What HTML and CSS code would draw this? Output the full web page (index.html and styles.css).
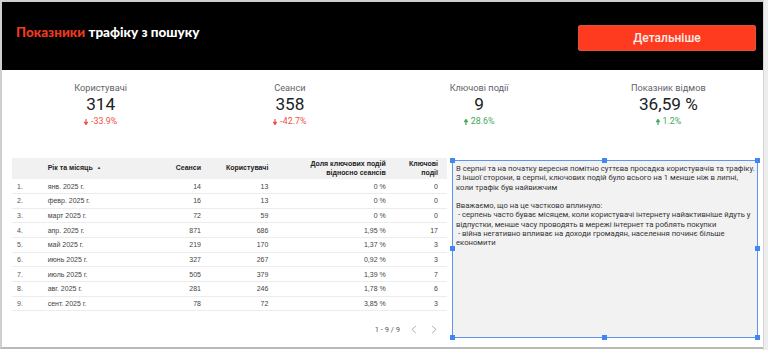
FILE: index.html
```html
<!DOCTYPE html>
<html lang="uk">
<head>
<meta charset="utf-8">
<title>Показники трафіку з пошуку</title>
<link rel="stylesheet" href="styles.css">
</head>
<body>
<div class="frame">
  <div class="page">
    <header class="hero">
      <h1 class="title"><span class="accent">Показники</span> трафіку з пошуку</h1>
      <a class="btn" href="#">Детальніше</a>
    </header>

    <section class="metrics">
      <div class="metric">
        <div class="m-label">Користувачі</div>
        <div class="m-value">314</div>
        <div class="m-delta down"><svg class="arr" viewBox="0 0 4 6"><path d="M2 0V4.5M0.6 3.4L2 5.6L3.4 3.4Z" /></svg>-33.9%</div>
      </div>
      <div class="metric">
        <div class="m-label">Сеанси</div>
        <div class="m-value">358</div>
        <div class="m-delta down"><svg class="arr" viewBox="0 0 4 6"><path d="M2 0V4.5M0.6 3.4L2 5.6L3.4 3.4Z" /></svg>-42.7%</div>
      </div>
      <div class="metric">
        <div class="m-label">Ключові події</div>
        <div class="m-value">9</div>
        <div class="m-delta up"><svg class="arr" viewBox="0 0 4 6"><path d="M2 6V1.5M0.6 2.6L2 0.4L3.4 2.6Z" /></svg>28.6%</div>
      </div>
      <div class="metric">
        <div class="m-label">Показник відмов</div>
        <div class="m-value">36,59 %</div>
        <div class="m-delta up"><svg class="arr" viewBox="0 0 4 6"><path d="M2 6V1.5M0.6 2.6L2 0.4L3.4 2.6Z" /></svg>1.2%</div>
      </div>
    </section>

    <section class="lower">
      <div class="tablewrap">
        <table class="data">
          <thead>
            <tr>
              <th class="c-idx"></th>
              <th class="c-date">Рік та місяць <span class="sort">▲</span></th>
              <th class="num c-s">Сеанси</th>
              <th class="num c-u">Користувачі</th>
              <th class="num c-r">Доля ключових подій<br>відносно сеансів</th>
              <th class="num c-k">Ключові<br>події</th>
            </tr>
          </thead>
          <tbody>
            <tr><td class="c-idx">1.</td><td>янв. 2025 г.</td><td class="num">14</td><td class="num">13</td><td class="num">0 %</td><td class="num">0</td></tr>
            <tr><td class="c-idx">2.</td><td>февр. 2025 г.</td><td class="num">16</td><td class="num">13</td><td class="num">0 %</td><td class="num">0</td></tr>
            <tr><td class="c-idx">3.</td><td>март 2025 г.</td><td class="num">72</td><td class="num">59</td><td class="num">0 %</td><td class="num">0</td></tr>
            <tr><td class="c-idx">4.</td><td>апр. 2025 г.</td><td class="num">871</td><td class="num">686</td><td class="num">1,95 %</td><td class="num">17</td></tr>
            <tr><td class="c-idx">5.</td><td>май 2025 г.</td><td class="num">219</td><td class="num">170</td><td class="num">1,37 %</td><td class="num">3</td></tr>
            <tr><td class="c-idx">6.</td><td>июнь 2025 г.</td><td class="num">327</td><td class="num">267</td><td class="num">0,92 %</td><td class="num">3</td></tr>
            <tr><td class="c-idx">7.</td><td>июль 2025 г.</td><td class="num">505</td><td class="num">379</td><td class="num">1,39 %</td><td class="num">7</td></tr>
            <tr><td class="c-idx">8.</td><td>авг. 2025 г.</td><td class="num">281</td><td class="num">246</td><td class="num">1,78 %</td><td class="num">6</td></tr>
            <tr><td class="c-idx">9.</td><td>сент. 2025 г.</td><td class="num">78</td><td class="num">72</td><td class="num">3,85 %</td><td class="num">3</td></tr>
          </tbody>
        </table>
        <div class="pager">
          <span class="range">1 - 9 / 9</span>
          <svg class="chev" viewBox="0 0 6 10"><path d="M5 1L1 5L5 9" /></svg>
          <svg class="chev" viewBox="0 0 6 10"><path d="M1 1L5 5L1 9" /></svg>
        </div>
      </div>

      <div class="note">
        <p>В серпні та на початку вересня помітно суттєва просадка користувачів та трафіку.<br>З іншої сторони, в серпні, ключових подій було всього на 1 менше ніж в липні, коли трафік був найвижчим</p>
        <p>Вважаємо, що на це частково вплинуло:<br>&nbsp;- серпень часто буває місяцем, коли користувачі інтернету найактивніше йдуть у відпустки, менше часу проводять в мережі інтернет та роблять покупки<br>&nbsp;- війна негативно впливає на доходи громадян, населення починє більше економити</p>
        <span class="h h-tl"></span><span class="h h-tc"></span><span class="h h-tr"></span>
        <span class="h h-ml"></span><span class="h h-mr"></span>
        <span class="h h-bl"></span><span class="h h-bc"></span><span class="h h-br"></span>
      </div>
    </section>
  </div>
  <div class="scroll"></div>
</div>
</body>
</html>
```

FILE: styles.css
```css
* { box-sizing: border-box; }
html, body { margin: 0; padding: 0; }
body {
  width: 768px;
  height: 350px;
  overflow: hidden;
  background: #ffffff;
  font-family: Roboto, "Liberation Sans", Arial, sans-serif;
  color: #333;
}
.frame {
  display: flex;
  width: 768px;
  height: 350px;
}
.page {
  width: 763px;
  height: 349px;
  border-top: 2px solid #cfcfcf;
  border-left: 2px solid #cfcfcf;
  border-bottom: 2px solid #b9b9b9;
  display: flex;
  flex-direction: column;
  background: #fff;
}
.scroll {
  width: 5px;
  height: 350px;
  background: #ededed;
  border-left: 1px solid #d6d6d6;
}

/* header */
.hero {
  height: 68px;
  background: #000;
  display: flex;
  justify-content: space-between;
  align-items: flex-start;
  padding: 0 7px 0 14px;
  flex: none;
}
.title {
  margin: 21px 0 0;
  font-family: Lato, "Open Sans", sans-serif;
  font-weight: 900;
  font-size: 13.5px;
  line-height: 18px;
  color: #fff;
}
.accent { color: #ee3a1f; }
.btn {
  margin-top: 23px;
  width: 178px;
  height: 26px;
  background: #ff3b1f;
  border: 1px solid #d7543f;
  border-radius: 2px;
  color: #fdeeea;
  text-decoration: none;
  font-family: Roboto, sans-serif;
  font-weight: 500;
  font-size: 12px;
  display: flex;
  align-items: center;
  justify-content: center;
}

/* metrics */
.metrics {
  display: grid;
  grid-template-columns: repeat(4, 1fr);
  padding: 12px 0 0 4px;
  height: 86px;
  flex: none;
}
.metric {
  display: flex;
  flex-direction: column;
  align-items: center;
}
.m-label {
  font-size: 9.2px;
  line-height: 12px;
  color: #5f6368;
}
.m-value {
  font-size: 17.2px;
  line-height: 20px;
  color: #202124;
}
.m-delta {
  margin-top: 2px;
  font-size: 8.8px;
  line-height: 11px;
  display: flex;
  align-items: center;
  gap: 3px;
}
.m-delta.down { color: #f0504a; }
.m-delta.up { color: #45a85a; }
.arr { width: 4px; height: 6px; }
.down .arr path { stroke: #f0504a; fill: #f0504a; stroke-width: 1.2; }
.up .arr path { stroke: #45a85a; fill: #45a85a; stroke-width: 1.2; }

/* lower */
.lower {
  display: flex;
  gap: 5px;
  padding: 2px 0 0 10px;
  flex: 1;
}
.tablewrap {
  width: 435px;
  display: flex;
  flex-direction: column;
}
.data {
  width: 435px;
  border-collapse: collapse;
  font-family: "Liberation Sans", Arial, sans-serif;
  font-size: 7px;
  color: #444;
  table-layout: fixed;
}
.data thead tr { background: #f1f1f1; height: 21px; }
.data th {
  font-weight: bold;
  color: #222;
  text-align: left;
  font-size: 7px;
  line-height: 8.3px;
  padding: 0 3px;
  vertical-align: middle;
}
.data th.num, .data td.num { text-align: right; }
.c-idx { width: 32px; }
.c-date { width: 90px; }
.c-s { width: 66px; }
.c-u { width: 66px; }
.c-r { width: 115px; }
.c-k { width: 57px; }
.data th.c-idx, .data td.c-idx { padding-left: 5px; }
.data th:last-child, .data td:last-child { padding-right: 9px; }
.sort { font-size: 4.5px; color: #444; vertical-align: 1px; margin-left: 2px; }
.data tbody tr { height: 14.65px; border-bottom: 1px solid #ececec; }
.data td { padding: 0 3px; white-space: nowrap; }
.data td.c-idx { color: #555; }

.pager {
  margin-top: 14px;
  display: flex;
  justify-content: flex-end;
  align-items: center;
  padding-right: 10px;
  font-size: 7.5px;
  color: #555;
}
.range { margin-right: 11px; }
.chev { width: 6px; height: 9px; }
.chev + .chev { margin-left: 14px; }
.chev path { fill: none; stroke: #9e9e9e; stroke-width: 1; }

/* note */
.note {
  position: relative;
  width: 306px;
  height: 178px;
  margin-top: 2px;
  background: #f2f2f2;
  border: 1px solid #5b95ef;
  padding: 3px 0 3px 3px;
  font-size: 7.7px;
  line-height: 9.3px;
  color: #333;
}
.note p { margin: 0 0 9.3px; }
.h {
  position: absolute;
  width: 5px;
  height: 5px;
  background: #4285f4;
}
.h-tl { left: -3px; top: -3px; }
.h-tc { left: calc(50% - 3px); top: -3px; }
.h-tr { right: -3px; top: -3px; }
.h-ml { left: -3px; top: calc(50% - 3px); }
.h-mr { right: -3px; top: calc(50% - 3px); }
.h-bl { left: -3px; bottom: -3px; }
.h-bc { left: calc(50% - 3px); bottom: -3px; }
.h-br { right: -3px; bottom: -3px; }
```
